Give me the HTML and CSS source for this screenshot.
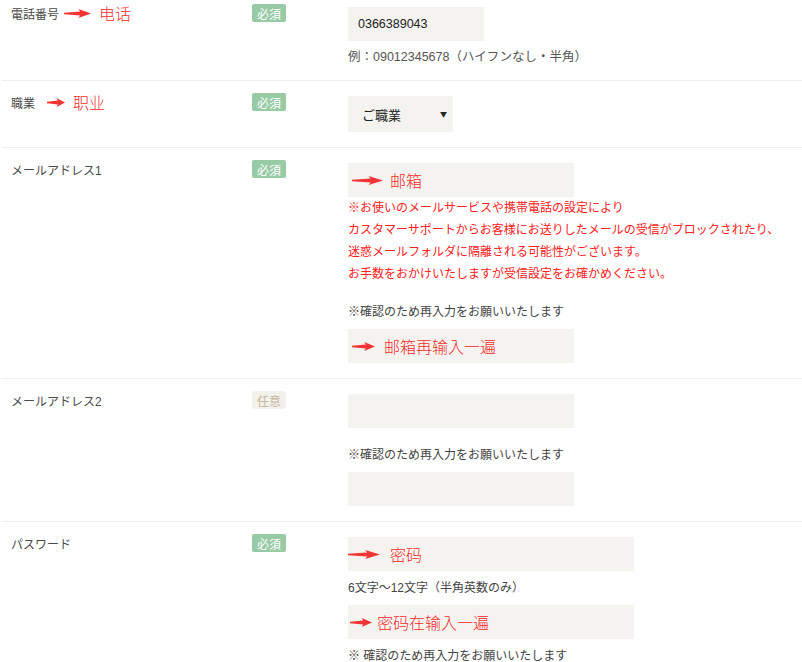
FILE: index.html
```html
<!DOCTYPE html>
<html lang="ja">
<head>
<meta charset="utf-8">
<title>Form</title>
<link rel="stylesheet" href="styles.css">
</head>
<body>
<div class="form">
  <div class="row row-first">
    <div class="label">電話番号
      <svg class="arrow a-27" viewBox="0 0 30 8" preserveAspectRatio="none"><path d="M0 3.3 L18 2.3 L16 0 L30 4 L16 8 L18 5.7 L0 4.7 Z"/></svg>
      <span class="anno anno-l1">电话</span>
    </div>
    <div class="badge-col"><span class="badge req">必須</span></div>
    <div class="field">
      <div class="input w-phone"><span class="value">0366389043</span></div>
      <p class="hint">例：09012345678（ハイフンなし・半角）</p>
    </div>
  </div>

  <div class="row row-select">
    <div class="label">職業
      <svg class="arrow a-18 gap-12" viewBox="0 0 30 8" preserveAspectRatio="none"><path d="M0 3.3 L18 2.3 L16 0 L30 4 L16 8 L18 5.7 L0 4.7 Z"/></svg>
      <span class="anno anno-l1">职业</span>
    </div>
    <div class="badge-col"><span class="badge req">必須</span></div>
    <div class="field">
      <div class="select"><span>ご職業</span><span class="caret">▼</span></div>
    </div>
  </div>

  <div class="row">
    <div class="label">メールアドレス1</div>
    <div class="badge-col"><span class="badge req">必須</span></div>
    <div class="field">
      <div class="input w-mail pad-4">
        <svg class="arrow a-31" viewBox="0 0 30 8" preserveAspectRatio="none"><path d="M0 3.3 L18 2.3 L16 0 L30 4 L16 8 L18 5.7 L0 4.7 Z"/></svg>
        <span class="anno g-7">邮箱</span>
      </div>
      <div class="warn">
        <p>※お使いのメールサービスや携帯電話の設定により</p>
        <p>カスタマーサポートからお客様にお送りしたメールの受信がブロックされたり、</p>
        <p>迷惑メールフォルダに隔離される可能性がございます。</p>
        <p>お手数をおかけいたしますが受信設定をお確かめください。</p>
      </div>
      <p class="note spaced">※確認のため再入力をお願いいたします</p>
      <div class="input w-mail pad-4">
        <svg class="arrow a-23" viewBox="0 0 30 8" preserveAspectRatio="none"><path d="M0 3.3 L18 2.3 L16 0 L30 4 L16 8 L18 5.7 L0 4.7 Z"/></svg>
        <span class="anno g-9">邮箱再输入一遍</span>
      </div>
    </div>
  </div>

  <div class="row">
    <div class="label">メールアドレス2</div>
    <div class="badge-col"><span class="badge opt">任意</span></div>
    <div class="field">
      <div class="input w-mail"></div>
      <p class="note spaced">※確認のため再入力をお願いいたします</p>
      <div class="input w-mail"></div>
    </div>
  </div>

  <div class="row">
    <div class="label">パスワード</div>
    <div class="badge-col"><span class="badge req">必須</span></div>
    <div class="field">
      <div class="input w-pass">
        <svg class="arrow a-32" viewBox="0 0 30 8" preserveAspectRatio="none"><path d="M0 3.3 L18 2.3 L16 0 L30 4 L16 8 L18 5.7 L0 4.7 Z"/></svg>
        <span class="anno g-10">密码</span>
      </div>
      <p class="note">6文字～12文字（半角英数のみ）</p>
      <div class="input w-pass pad-2">
        <svg class="arrow a-22" viewBox="0 0 30 8" preserveAspectRatio="none"><path d="M0 3.3 L18 2.3 L16 0 L30 4 L16 8 L18 5.7 L0 4.7 Z"/></svg>
        <span class="anno g-5">密码在输入一遍</span>
      </div>
      <p class="note">※ 確認のため再入力をお願いいたします</p>
    </div>
  </div>
</div>
</body>
</html>
```

FILE: styles.css
```css
html, body {
  margin: 0;
  padding: 0;
  background: #ffffff;
}

body {
  font-family: "Liberation Sans", "Noto Sans CJK JP", sans-serif;
  font-size: 12px;
  color: #444;
  overflow: hidden;
}

p {
  margin: 0;
}

.form {
  margin-top: -8px;
}

.row {
  display: grid;
  grid-template-columns: 241px 96px 1fr;
  margin-left: 2px;
  padding: 12px 0 15px 9px;
  border-bottom: 1px solid #efefef;
}

.row-first {
  padding-bottom: 12px;
}

.label {
  display: flex;
  align-items: center;
  height: 18px;
  font-size: 12px;
  color: #4a4a4a;
  white-space: nowrap;
}

.arrow {
  display: block;
  height: 9px;
  fill: #f33434;
  margin-left: 5px;
  flex: none;
}

.gap-12 { margin-left: 12px; }

.a-27 { width: 27px; }
.a-18 { width: 18px; }
.a-31 { width: 31px; margin-left: 0; }
.a-23 { width: 23px; margin-left: 0; }
.a-32 { width: 32px; margin-left: 0; }
.a-22 { width: 22px; margin-left: 0; }

.anno {
  font-family: "Noto Sans CJK SC", sans-serif;
  font-size: 16px;
  font-weight: 300;
  color: #f52b2b;
  line-height: 18px;
}

.anno-l1 { margin-left: 8px; }
.g-5 { margin-left: 5px; }
.g-7 { margin-left: 7px; }
.g-9 { margin-left: 9px; }
.g-10 { margin-left: 10px; }

.badge-col {
  display: flex;
  align-items: flex-start;
}

.badge {
  display: inline-flex;
  align-items: center;
  justify-content: center;
  width: 34px;
  height: 18px;
  border-radius: 2px;
  font-family: "Noto Sans CJK JP", sans-serif;
  font-size: 12px;
}

.badge.req {
  background: #98caa5;
  color: #ffffff;
}

.badge.opt {
  background: #f3f1ec;
  color: #c6b79f;
}

.field {
  padding-top: 3px;
  display: flex;
  flex-direction: column;
  align-items: flex-start;
}

.input {
  box-sizing: border-box;
  height: 34px;
  background: #f4f3ef;
  display: flex;
  align-items: center;
  padding-left: 0;
}

.pad-4 { padding-left: 4px; }
.pad-2 { padding-left: 2px; }

.w-phone { width: 136px; padding-left: 10px; }
.w-mail { width: 226px; }
.w-pass { width: 286px; }

.value {
  font-size: 12.5px;
  color: #222;
}

.hint {
  margin-top: 5px;
  line-height: 22px;
  font-size: 12.5px;
  color: #555;
}

.select {
  box-sizing: border-box;
  width: 105px;
  height: 36px;
  background: #f4f3ef;
  display: flex;
  align-items: center;
  justify-content: space-between;
  padding: 0 6px 0 14px;
  font-family: "Noto Sans CJK JP", sans-serif;
  font-size: 13px;
  color: #222;
}

.caret {
  font-size: 7px;
  color: #222;
}

.warn p {
  line-height: 22px;
  font-size: 12px;
  color: #ff2121;
}

.note {
  line-height: 22px;
  margin: 6px 0;
  font-size: 12px;
  color: #444;
}

.note.spaced {
  margin-top: 16px;
}
```
